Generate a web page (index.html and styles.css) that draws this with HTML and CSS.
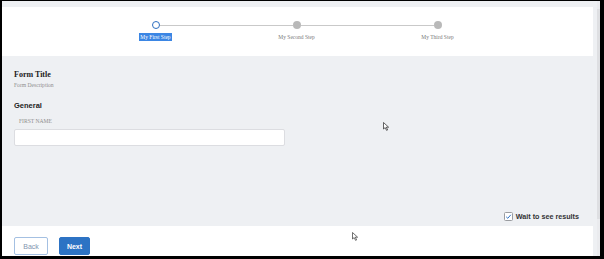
FILE: index.html
```html
<!DOCTYPE html>
<html>
<head>
<meta charset="utf-8">
<link rel="stylesheet" href="styles.css">
</head>
<body>
<div class="frame">
  <div class="app">
    <header class="header">
      <div class="stepper">
        <div class="step">
          <div class="track"><span class="seg seg-none"></span><span class="dot dot-active"></span><span class="seg"></span></div>
          <div class="label"><span class="sel">My First Step</span></div>
        </div>
        <div class="step">
          <div class="track"><span class="seg"></span><span class="dot"></span><span class="seg"></span></div>
          <div class="label">My Second Step</div>
        </div>
        <div class="step">
          <div class="track"><span class="seg"></span><span class="dot"></span><span class="seg seg-none"></span></div>
          <div class="label">My Third Step</div>
        </div>
      </div>
    </header>
    <main class="main">
      <div class="form-title">Form Title</div>
      <div class="form-desc">Form Description</div>
      <div class="section">General</div>
      <div class="field-label">FIRST NAME</div>
      <div class="input"></div>
      <div class="wait-row">
        <span class="checkbox">
          <svg width="7" height="7" viewBox="0 0 7 7"><path d="M1.2 3.8 L2.8 5.3 L5.8 1.8" fill="none" stroke="#2f74c6" stroke-width="1"/></svg>
        </span>
        <span class="wait-text">Wait to see results</span>
      </div>
      <svg class="cursor cursor-a" width="7" height="9" viewBox="0 0 7 9"><path d="M0.5 0.5 L0.5 7 L2.2 5.6 L3.6 8.4 L4.6 7.9 L3.3 5.2 L5.6 5.2 Z" fill="#fff" stroke="#222" stroke-width="0.7"/></svg>
    </main>
    <footer class="footer">
      <button class="btn btn-back">Back</button>
      <button class="btn btn-next">Next</button>
      <svg class="cursor cursor-b" width="7" height="9" viewBox="0 0 7 9"><path d="M0.5 0.5 L0.5 7 L2.2 5.6 L3.6 8.4 L4.6 7.9 L3.3 5.2 L5.6 5.2 Z" fill="#fff" stroke="#333" stroke-width="0.7"/></svg>
    </footer>
  </div>
  <div class="scrollbar"><div class="thumb"></div></div>
</div>
</body>
</html>
```
FILE: styles.css
```css
html, body {
  margin: 0;
  padding: 0;
  background: #000;
  width: 604px;
  height: 259px;
  overflow: hidden;
}
.frame {
  margin: 1px 4px 0 2px;
  width: 598px;
  height: 255px;
  background: #eef0f3;
  display: flex;
  overflow: hidden;
}
.app {
  width: 591px;
  display: flex;
  flex-direction: column;
  padding-top: 6px;
}
.scrollbar {
  width: 3px;
  margin-left: 4px;
  background: #eaebee;
  display: flex;
  flex-direction: column;
}
.thumb {
  margin-top: 8px;
  height: 210px;
  background: #dedfe2;
}
.header {
  height: 49px;
  background: #fff;
  display: flex;
  justify-content: center;
}
.stepper {
  display: flex;
  padding-top: 14px;
  margin-left: -2px;
}
.step {
  width: 141px;
  display: flex;
  flex-direction: column;
  align-items: center;
}
.track {
  width: 100%;
  height: 8px;
  display: flex;
  align-items: center;
}
.seg {
  flex: 1;
  height: 1px;
  background: #c9c9c9;
}
.seg-none {
  background: transparent;
}
.dot {
  width: 8px;
  height: 8px;
  border-radius: 50%;
  background: #b9b9b9;
  box-sizing: border-box;
}
.dot-active {
  background: #fff;
  border: 1.5px solid #2e6fc0;
}
.label {
  margin-top: 4px;
  font-family: "Liberation Serif", serif;
  font-size: 5.5px;
  line-height: 8px;
  color: #7a7a7a;
  white-space: nowrap;
}
.sel {
  display: inline-block;
  background: #3b86e4;
  color: #fff;
  padding: 0 1px;
}
.main {
  flex: 1;
  display: flex;
  flex-direction: column;
  padding: 14px 14px 5px 12px;
  position: relative;
}
.form-title {
  font-family: "Liberation Serif", serif;
  font-weight: bold;
  font-size: 8px;
  line-height: 9px;
  color: #222;
}
.form-desc {
  margin-top: 3px;
  font-family: "Liberation Serif", serif;
  font-size: 5.6px;
  line-height: 7px;
  color: #8e8e8e;
}
.section {
  margin-top: 11.5px;
  font-family: "Liberation Sans", Arial, sans-serif;
  font-weight: bold;
  font-size: 7.5px;
  line-height: 9px;
  color: #222;
}
.field-label {
  margin-top: 8.5px;
  padding-left: 5px;
  font-family: "Liberation Serif", serif;
  font-size: 5.6px;
  line-height: 7px;
  color: #8e8e8e;
}
.input {
  margin-top: 3.5px;
  width: 271px;
  height: 17.5px;
  box-sizing: border-box;
  background: #fff;
  border: 1px solid #dcdde1;
  border-radius: 2px;
}
.wait-row {
  margin-top: auto;
  align-self: flex-end;
  display: flex;
  align-items: center;
  gap: 3px;
}
.checkbox {
  width: 9px;
  height: 9px;
  box-sizing: border-box;
  border: 1px solid #9a9ca0;
  border-radius: 1.5px;
  background: #fff;
  display: flex;
  align-items: center;
  justify-content: center;
}
.wait-text {
  font-family: "Liberation Sans", Arial, sans-serif;
  font-weight: bold;
  font-size: 7.2px;
  line-height: 9px;
  color: #333;
}
.footer {
  height: 30px;
  box-sizing: border-box;
  background: #fff;
  padding: 11px 0 0 12px;
  display: flex;
  align-items: flex-start;
  gap: 11px;
  position: relative;
}
.btn {
  height: 18px;
  box-sizing: border-box;
  border-radius: 2px;
  font-family: "Liberation Sans", Arial, sans-serif;
  font-size: 7px;
  padding: 0;
  margin: 0;
}
.btn-back {
  width: 34px;
  background: #fff;
  border: 1px solid #a4c0e2;
  color: #7f95b0;
}
.btn-next {
  width: 31px;
  background: #2d73c4;
  border: 1px solid #2d73c4;
  color: #fff;
  font-weight: bold;
}
.cursor {
  position: absolute;
}
.cursor-a {
  left: 381px;
  top: 66px;
}
.cursor-b {
  left: 350px;
  top: 6px;
}
```
